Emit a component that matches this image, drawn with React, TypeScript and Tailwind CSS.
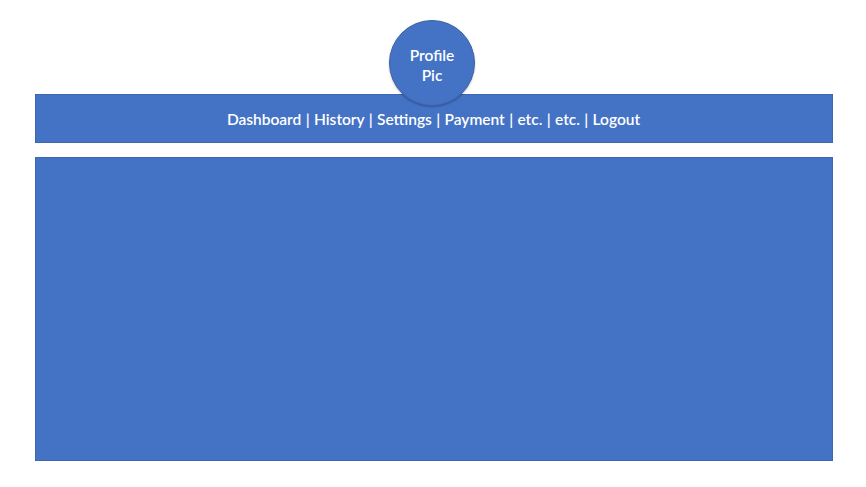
export default function App() {
  return (
    <div className="min-h-screen w-full bg-white pl-[35px] pr-[33px] pt-[20px]" style={{ fontFamily: 'Lato, "Open Sans", sans-serif' }}>
      <div className="flex justify-center">
        <div className="relative z-10 -mb-[12px] ml-[-4px] flex h-[86px] w-[86px] flex-col items-center justify-center rounded-full border border-[#3a62a8] bg-[#4472c4] pt-[3px] text-[15.5px] font-semibold leading-[20px] text-white shadow-[0_1px_2px_rgba(0,0,0,0.25)]">
          <span>Profile</span>
          <span>Pic</span>
        </div>
      </div>

      <nav className="flex h-[49px] items-center justify-center border border-[#3d67b0] bg-[#4472c4] text-[15.5px] font-semibold text-white">
        <span className="ml-[-1px] pt-[3px] [word-spacing:0.5px]">
          Dashboard | History | Settings | Payment | etc. | etc. | Logout
        </span>
      </nav>

      <main className="mt-[14px] h-[304px] border border-[#3d67b0] bg-[#4472c4]"></main>
    </div>
  );
}
